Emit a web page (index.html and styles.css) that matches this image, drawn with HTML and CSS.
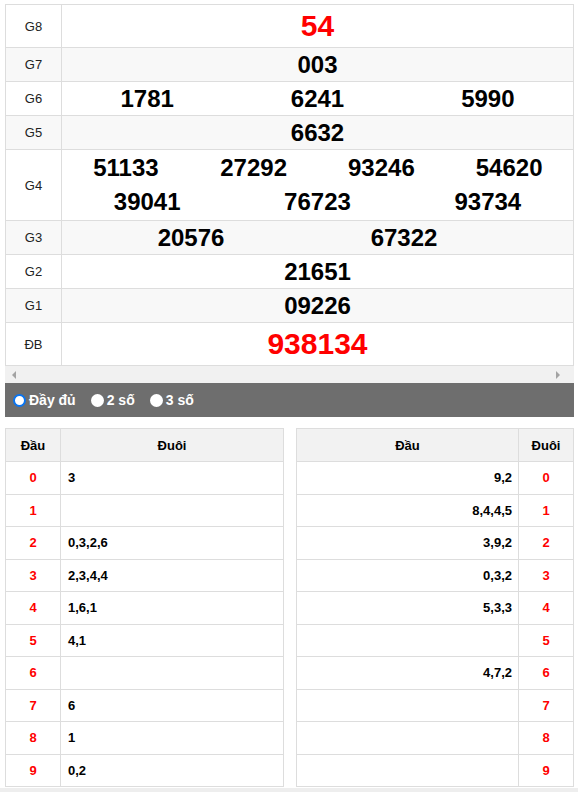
FILE: index.html
```html
<!DOCTYPE html>
<html lang="vi">
<head>
<meta charset="utf-8">
<title>Kết quả</title>
<link rel="stylesheet" href="styles.css">
</head>
<body>
<div class="wrap">
  <table class="kq">
    <tr class="r-big"><td class="lbl">G8</td><td><div class="num big">54</div></td></tr>
    <tr><td class="lbl">G7</td><td><div class="num">003</div></td></tr>
    <tr><td class="lbl">G6</td><td><div class="nums"><span class="num">1781</span><span class="num">6241</span><span class="num">5990</span></div></td></tr>
    <tr><td class="lbl">G5</td><td><div class="num">6632</div></td></tr>
    <tr><td class="lbl">G4</td><td class="g4">
      <div class="nums"><span class="num">51133</span><span class="num">27292</span><span class="num">93246</span><span class="num">54620</span></div>
      <div class="nums"><span class="num">39041</span><span class="num">76723</span><span class="num">93734</span></div>
    </td></tr>
    <tr><td class="lbl">G3</td><td><div class="nums g3"><span class="num">20576</span><span class="num">67322</span></div></td></tr>
    <tr><td class="lbl">G2</td><td><div class="num">21651</div></td></tr>
    <tr><td class="lbl">G1</td><td><div class="num">09226</div></td></tr>
    <tr class="r-big"><td class="lbl">ĐB</td><td><div class="num big">938134</div></td></tr>
  </table>
  <div class="scrollbar"><span class="arr arr-l"></span><span class="arr arr-r"></span></div>
  <div class="opts">
    <label class="opt"><span class="radio on"></span>Đầy đủ</label>
    <label class="opt"><span class="radio"></span>2 số</label>
    <label class="opt"><span class="radio"></span>3 số</label>
  </div>
  <div class="loto">
    <table class="lt">
      <tr><th class="c-d">Đầu</th><th>Đuôi</th></tr>
      <tr><td class="c-d">0</td><td class="v">3</td></tr>
      <tr><td class="c-d">1</td><td class="v"></td></tr>
      <tr><td class="c-d">2</td><td class="v">0,3,2,6</td></tr>
      <tr><td class="c-d">3</td><td class="v">2,3,4,4</td></tr>
      <tr><td class="c-d">4</td><td class="v">1,6,1</td></tr>
      <tr><td class="c-d">5</td><td class="v">4,1</td></tr>
      <tr><td class="c-d">6</td><td class="v"></td></tr>
      <tr><td class="c-d">7</td><td class="v">6</td></tr>
      <tr><td class="c-d">8</td><td class="v">1</td></tr>
      <tr><td class="c-d">9</td><td class="v">0,2</td></tr>
    </table>
    <table class="lt rt">
      <tr><th>Đầu</th><th class="c-d">Đuôi</th></tr>
      <tr><td class="v">9,2</td><td class="c-d">0</td></tr>
      <tr><td class="v">8,4,4,5</td><td class="c-d">1</td></tr>
      <tr><td class="v">3,9,2</td><td class="c-d">2</td></tr>
      <tr><td class="v">0,3,2</td><td class="c-d">3</td></tr>
      <tr><td class="v">5,3,3</td><td class="c-d">4</td></tr>
      <tr><td class="v"></td><td class="c-d">5</td></tr>
      <tr><td class="v">4,7,2</td><td class="c-d">6</td></tr>
      <tr><td class="v"></td><td class="c-d">7</td></tr>
      <tr><td class="v"></td><td class="c-d">8</td></tr>
      <tr><td class="v"></td><td class="c-d">9</td></tr>
    </table>
  </div>
</div>
<div class="foot"></div>
</body>
</html>
```

FILE: styles.css
```css
html, body { margin: 0; padding: 0; background: #fff; }
body { font-family: "Liberation Sans", Arial, sans-serif; color: #000; }
.wrap { padding: 4px 0 0 5px; width: 569px; }

.kq { border-collapse: collapse; width: 569px; table-layout: fixed; }
.kq td { border: 1px solid #ddd; padding: 0; text-align: center; vertical-align: middle; }
.kq tr:nth-child(even) { background: #f8f8f8; }
.kq .lbl { width: 55px; font-size: 13px; color: #222; }
.num { font-weight: bold; font-size: 24px; line-height: 33px; display: block; }
.big { font-size: 30px; line-height: 42px; color: #f00; }
.nums { display: grid; grid-auto-flow: column; grid-auto-columns: 1fr; }
.g4 { padding: 1px 0 1px 0 !important; }
.g4 .num { line-height: 34px; }
.nums.g3 { grid-template-columns: 258px 168px; grid-auto-columns: auto; justify-content: start; }

.scrollbar { height: 17px; background: #f1f1f1; display: flex; align-items: center; justify-content: space-between; padding: 0 14px 0 7px; }
.arr { width: 0; height: 0; border-top: 4px solid transparent; border-bottom: 4px solid transparent; }
.arr-l { border-right: 4px solid #a3a3a3; }
.arr-r { border-left: 4px solid #a3a3a3; }

.opts { background: #6e6e6e; height: 34px; display: flex; align-items: center; gap: 15px; padding-left: 8px; }
.opt { display: flex; align-items: center; gap: 3px; color: #fff; font-weight: bold; font-size: 14px; }
.radio { width: 13px; height: 13px; border-radius: 50%; background: #fff; box-sizing: border-box; }
.radio.on { border: 2px solid #0a74f0; }

.loto { display: flex; justify-content: space-between; margin-top: 11px; }
.lt { border-collapse: collapse; width: 279px; table-layout: fixed; font-size: 13px; }
.lt.rt { width: 278px; }
.lt th, .lt td { border: 1px solid #ddd; height: 31.5px; padding: 0; }
.lt th { background: #f2f2f2; font-weight: bold; text-align: center; height: 32px; }
.lt .c-d { width: 54px; text-align: center; }
.lt td.c-d { color: #f00; font-weight: bold; }
.lt td.v { font-weight: bold; padding: 0 7px; text-align: left; }
.lt.rt td.v { text-align: right; padding-right: 6px; }

.foot { height: 10px; background: #eee; margin-top: 1px; }
```
